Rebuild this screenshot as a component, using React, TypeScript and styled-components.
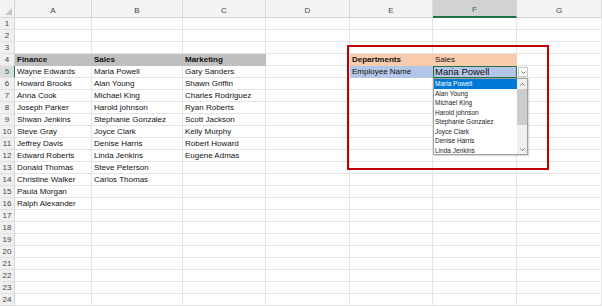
import { Fragment } from "react"
import styled, { createGlobalStyle } from "styled-components"

const GlobalStyle = createGlobalStyle`
  html, body {
    margin: 0;
    padding: 0;
    background: #ffffff;
    overflow: hidden;
  }
  body {
    font-family: "Liberation Sans", Arial, sans-serif;
  }
`

const COLS = [77, 91, 83, 84, 83, 84, 85]
const LETTERS = ["A", "B", "C", "D", "E", "F", "G"]
const ROWS = 24

const finance = ["Wayne Edwards", "Howard Brooks", "Anna Cook", "Joseph Parker", "Shwan Jenkins", "Steve Gray", "Jeffrey Davis", "Edward Roberts", "Donald Thomas", "Christine Walker", "Paula Morgan", "Ralph Alexander"]
const sales = ["Maria Powell", "Alan Young", "Michael King", "Harold johnson", "Stephanie Gonzalez", "Joyce Clark", "Denise Harris", "Linda Jenkins", "Steve Peterson", "Carlos Thomas"]
const marketing = ["Gary Sanders", "Shawn Griffin", "Charles Rodriguez", "Ryan Roberts", "Scott Jackson", "Kelly Murphy", "Robert Howard", "Eugene Admas"]

const Sheet = styled.div`
  position: relative;
  width: 602px;
  height: 307px;
  overflow: hidden;
  display: grid;
  grid-template-columns: 15px ${COLS.map((c) => `${c}px`).join(" ")};
  grid-template-rows: 18px repeat(${ROWS}, 12px);
  background: #ffffff;
`

const Corner = styled.div`
  background: #f3f3f3;
  border-right: 1px solid #d4d4d4;
  border-bottom: 1px solid #d4d4d4;
  box-sizing: border-box;
  position: relative;
  &::after {
    content: "";
    position: absolute;
    right: 2px;
    bottom: 2px;
    width: 0;
    height: 0;
    border-left: 7px solid transparent;
    border-bottom: 7px solid #c6c6c6;
  }
`

const ColHead = styled.div<{ $active?: boolean }>`
  box-sizing: border-box;
  background: ${(p) => (p.$active ? "#d2d2d2" : "#f3f3f3")};
  border-right: 1px solid #dadada;
  border-bottom: ${(p) => (p.$active ? "2px solid #217346" : "1px solid #d4d4d4")};
  color: ${(p) => (p.$active ? "#217346" : "#444444")};
  font-size: 8px;
  display: flex;
  align-items: flex-end;
  justify-content: center;
  padding-bottom: 2px;
`

const RowHead = styled.div<{ $active?: boolean }>`
  box-sizing: border-box;
  background: ${(p) => (p.$active ? "#dcdcdc" : "#f0f0f0")};
  border-right: ${(p) => (p.$active ? "1px solid #217346" : "1px solid #d4d4d4")};
  border-bottom: 1px solid #e2e2e2;
  color: ${(p) => (p.$active ? "#217346" : "#444444")};
  font-size: 8px;
  display: flex;
  align-items: center;
  justify-content: center;
  line-height: 1;
`

const Cell = styled.div<{ $bg?: string; $bold?: boolean; $selected?: boolean; $big?: boolean }>`
  box-sizing: border-box;
  background: ${(p) => p.$bg || "#ffffff"};
  border-right: 1px solid ${(p) => (p.$bg ? p.$bg : "#e4e4e4")};
  border-bottom: 1px solid ${(p) => (p.$bg ? p.$bg : "#e4e4e4")};
  ${(p) => p.$selected && "outline: 1px solid #217346; outline-offset: -1px;"}
  font-size: ${(p) => (p.$big ? "9.5px" : "8px")};
  font-weight: ${(p) => (p.$bold ? 700 : 400)};
  color: #111111;
  padding-left: 2px;
  white-space: nowrap;
  overflow: visible;
  display: flex;
  align-items: center;
  line-height: 1;
`

const RedBox = styled.div`
  position: absolute;
  left: 347px;
  top: 45px;
  width: 202px;
  height: 125px;
  box-sizing: border-box;
  border: 2px solid #c00000;
  pointer-events: none;
`

const ArrowButton = styled.div`
  position: absolute;
  left: 518px;
  top: 67px;
  width: 10px;
  height: 10px;
  box-sizing: border-box;
  background: #ffffff;
  border: 1px solid #c8c8c8;
  display: flex;
  align-items: center;
  justify-content: center;
`

const List = styled.div`
  position: absolute;
  left: 433px;
  top: 78px;
  width: 95px;
  height: 77px;
  box-sizing: border-box;
  border: 1px solid #a0a0a0;
  background: #ffffff;
  display: flex;
  box-shadow: 1px 1px 1px rgba(0, 0, 0, 0.15);
`

const Items = styled.div`
  flex: 1;
  display: flex;
  flex-direction: column;
  overflow: hidden;
`

const Item = styled.div<{ $active?: boolean }>`
  height: 9.5px;
  flex-shrink: 0;
  font-size: 6.5px;
  line-height: 9.5px;
  padding-left: 1px;
  white-space: nowrap;
  background: ${(p) => (p.$active ? "#0078d7" : "transparent")};
  color: ${(p) => (p.$active ? "#ffffff" : "#222222")};
`

const Scrollbar = styled.div`
  width: 10px;
  background: #f0f0f0;
  display: flex;
  flex-direction: column;
`

const ScrollArrow = styled.div`
  height: 10px;
  display: flex;
  align-items: center;
  justify-content: center;
`

const Thumb = styled.div`
  height: 36px;
  background: #cdcdcd;
`

const Track = styled.div`
  flex: 1;
`

function Chevron({ up }: { up?: boolean }) {
  return (
    <svg width="5" height="3" viewBox="0 0 5 3">
      <path d={up ? "M0.5 2.5 L2.5 0.5 L4.5 2.5" : "M0.5 0.5 L2.5 2.5 L4.5 0.5"} fill="none" stroke="#606060" strokeWidth="0.9" />
    </svg>
  )
}

interface CellData {
  text: string
  bg?: string
  bold?: boolean
  selected?: boolean
  big?: boolean
}

function cellFor(row: number, col: number): CellData {
  if (row === 4) {
    if (col === 0) return { text: "Finance", bg: "#bfbfbf", bold: true }
    if (col === 1) return { text: "Sales", bg: "#bfbfbf", bold: true }
    if (col === 2) return { text: "Marketing", bg: "#bfbfbf", bold: true }
    if (col === 4) return { text: "Departments", bg: "#f8cbad", bold: true }
    if (col === 5) return { text: "Sales", bg: "#f8cbad" }
  }
  if (row === 5) {
    if (col === 4) return { text: "Employee Name", bg: "#b4c6e7" }
    if (col === 5) return { text: "Maria Powell", bg: "#b4c6e7", selected: true, big: true }
  }
  if (row >= 5) {
    const i = row - 5
    if (col === 0 && finance[i]) return { text: finance[i] }
    if (col === 1 && sales[i]) return { text: sales[i] }
    if (col === 2 && marketing[i]) return { text: marketing[i] }
  }
  return { text: "" }
}

export default function App() {
  const rows = Array.from({ length: ROWS }, (_, i) => i + 1)

  return (
    <>
      <GlobalStyle />
      <Sheet>
        <Corner />
        {LETTERS.map((l) => (
          <ColHead key={l} $active={l === "F"}>{l}</ColHead>
        ))}
        {rows.map((r) => (
          <Fragment key={r}>
            <RowHead $active={r === 5}>{r}</RowHead>
            {LETTERS.map((l, c) => {
              const cell = cellFor(r, c)
              return (
                <Cell
                  key={`${l}${r}`}
                  $bg={cell.bg}
                  $bold={cell.bold}
                  $selected={cell.selected}
                  $big={cell.big}
                >
                  {cell.text}
                </Cell>
              )
            })}
          </Fragment>
        ))}

        <RedBox />
        <ArrowButton>
          <Chevron />
        </ArrowButton>
        <List>
          <Items>
            {sales.slice(0, 8).map((name, i) => (
              <Item key={name} $active={i === 0}>{name}</Item>
            ))}
          </Items>
          <Scrollbar>
            <ScrollArrow><Chevron up /></ScrollArrow>
            <Thumb />
            <Track />
            <ScrollArrow><Chevron /></ScrollArrow>
          </Scrollbar>
        </List>
      </Sheet>
    </>
  )
}
